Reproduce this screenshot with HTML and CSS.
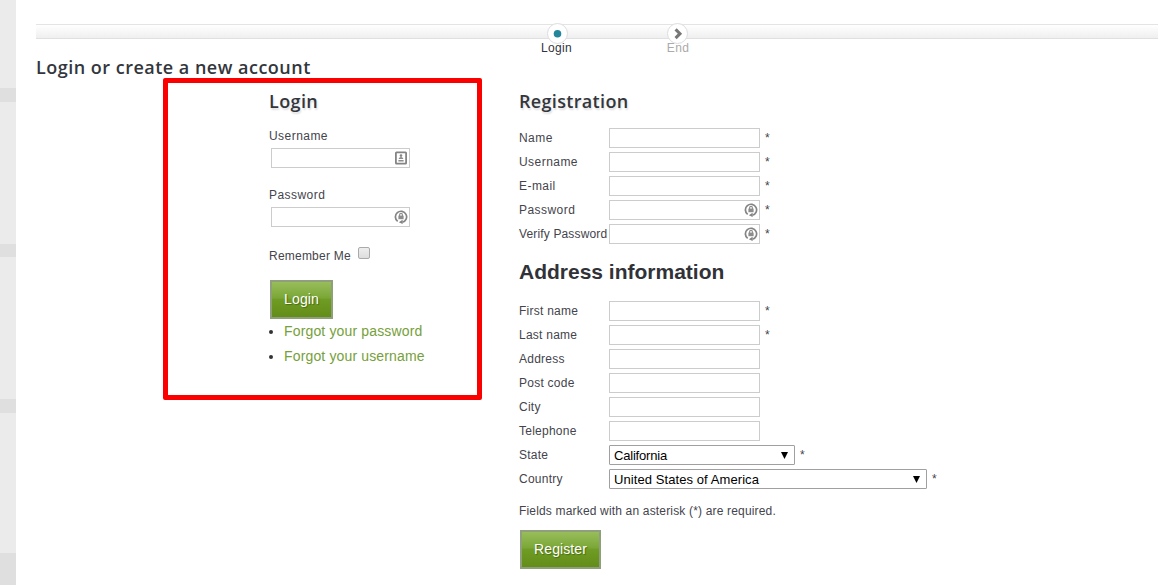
FILE: index.html
```html
<!DOCTYPE html>
<html lang="en">

<head>
    <meta charset="UTF-8" />
    <meta name="viewport" content="width=device-width, initial-scale=1.0" />
    <title>Login or create a new account</title>
    <link rel="stylesheet" href="styles.css">
</head>

<body>
    <svg class="sprite" aria-hidden="true">
        <symbol id="icon-user" viewBox="0 0 14 14">
            <rect x="1.9" y="1.4" width="10.2" height="11.2" rx="0.6" fill="#fff" stroke="#848484" stroke-width="1.8" />
            <circle cx="7" cy="4.6" r="1.3" fill="#848484" />
            <path d="M4.8 8V7.2Q7 5 9.2 7.2V8zM4.4 8.9h5.2v1.5H4.4z" fill="#8c8c8c" />
        </symbol>
        <symbol id="icon-lock" viewBox="0 0 14 14">
            <path d="M3.7 11.4A5.6 5.6 0 1 1 8.4 12.3" fill="none" stroke="#848484" stroke-width="1.7" />
            <path d="M4.8 12.2l3.8-2.5v4.3z" fill="#848484" />
            <path d="M5.6 6.2V4.8a1.4 1.4 0 0 1 2.8 0v1.4" fill="none" stroke="#8c8c8c" stroke-width="1.1" />
            <rect x="4.4" y="5.6" width="5.2" height="3.6" fill="#8c8c8c" />
        </symbol>
    </svg>

    <aside class="side-strip">
        <div class="side-block"></div>
        <div class="side-block"></div>
        <div class="side-block"></div>
        <div class="side-block"></div>
    </aside>

    <main class="page">
        <ol class="steps">
            <li class="step active">
                <svg class="step-icon" viewBox="0 0 20 20"><circle cx="10" cy="10.3" r="4" fill="#24869b" /></svg>
                <span>Login</span>
            </li>
            <li class="step">
                <svg class="step-icon" viewBox="0 0 20 20"><path d="M8 5.6l4.6 4.6L8 14.8" fill="none" stroke="#777" stroke-width="3.2" /></svg>
                <span>End</span>
            </li>
        </ol>

        <h1 class="page-title">Login or create a new account</h1>

        <div class="columns">
            <form class="login-form">
                <h2 class="heading login-heading">Login</h2>
                <label class="login-label" for="login-user">Username</label>
                <div class="field login-field">
                    <input type="text" id="login-user">
                    <svg class="field-icon"><use href="#icon-user" /></svg>
                </div>
                <label class="login-label" for="login-pass">Password</label>
                <div class="field login-field">
                    <input type="password" id="login-pass">
                    <svg class="field-icon"><use href="#icon-lock" /></svg>
                </div>
                <div class="remember">
                    <label for="remember">Remember Me</label>
                    <input type="checkbox" class="checkbox" id="remember">
                </div>
                <button type="button" class="btn">Login</button>
                <ul class="links">
                    <li><a href="#">Forgot your password</a></li>
                    <li><a href="#">Forgot your username</a></li>
                </ul>
            </form>

            <form class="register-form">
                <h2 class="heading">Registration</h2>
                <div class="rows">
                    <div class="row"><label for="name">Name</label><div class="field"><input type="text" id="name"></div><span class="star">*</span></div>
                    <div class="row"><label for="user">Username</label><div class="field"><input type="text" id="user"></div><span class="star">*</span></div>
                    <div class="row"><label for="email">E-mail</label><div class="field"><input type="text" id="email"></div><span class="star">*</span></div>
                    <div class="row">
                        <label for="pass">Password</label>
                        <div class="field"><input type="password" id="pass"><svg class="field-icon"><use href="#icon-lock" /></svg></div>
                        <span class="star">*</span>
                    </div>
                    <div class="row">
                        <label class="long" for="pass2">Verify Password</label>
                        <div class="field"><input type="password" id="pass2"><svg class="field-icon"><use href="#icon-lock" /></svg></div>
                        <span class="star">*</span>
                    </div>
                </div>

                <h2 class="address-heading">Address information</h2>
                <div class="rows address-rows">
                    <div class="row"><label for="first">First name</label><div class="field"><input type="text" id="first"></div><span class="star">*</span></div>
                    <div class="row"><label for="last">Last name</label><div class="field"><input type="text" id="last"></div><span class="star">*</span></div>
                    <div class="row"><label for="address">Address</label><div class="field"><input type="text" id="address"></div></div>
                    <div class="row"><label for="zip">Post code</label><div class="field"><input type="text" id="zip"></div></div>
                    <div class="row"><label for="city">City</label><div class="field"><input type="text" id="city"></div></div>
                    <div class="row"><label for="phone">Telephone</label><div class="field"><input type="text" id="phone"></div></div>
                    <div class="row">
                        <label>State</label>
                        <div class="select state"><span>California</span><svg class="caret" viewBox="0 0 7 7"><path d="M0 0h7L3.5 7z" /></svg></div>
                        <span class="star">*</span>
                    </div>
                    <div class="row">
                        <label>Country</label>
                        <div class="select country"><span>United States of America</span><svg class="caret" viewBox="0 0 7 7"><path d="M0 0h7L3.5 7z" /></svg></div>
                        <span class="star">*</span>
                    </div>
                </div>
                <p class="note">Fields marked with an asterisk (*) are required.</p>
                <button type="button" class="btn btn-register">Register</button>
            </form>
        </div>
    </main>

    <div class="login-frame"></div>
</body>

</html>
```
FILE: styles.css
```css
* {
    margin: 0;
    padding: 0;
    box-sizing: border-box;
}

body {
    position: relative;
    display: flex;
    height: 585px;
    overflow: hidden;
    background: #fff;
    color: #44444c;
    font-family: "Liberation Sans", Arial, sans-serif;
    font-size: 12px;
    letter-spacing: 0.45px;
}

.sprite {
    display: none;
}

/* left strip of the site background */
.side-strip {
    display: grid;
    grid-template-rows: 88px 142px 142px 140px;
    row-gap: 13.5px;
    width: 16px;
    background: #dfdfdf;
}

.side-block {
    background: #ebebeb;
}

.page {
    flex: 1;
    padding: 24px 0 0 20px;
}

/* progress steps */
.steps {
    display: flex;
    gap: 79px;
    height: 15px;
    padding-left: 501px;
    list-style: none;
    border-top: 1px solid #e4e4e4;
    border-bottom: 1px solid #e0e0e0;
    background: linear-gradient(#fff, #efefef);
}

.step {
    display: flex;
    flex-direction: column;
    align-items: center;
    width: 41px;
    margin-top: -2px;
    color: #aaa;
    letter-spacing: 0.3px;
    line-height: 14px;
}

.step.active {
    color: #333340;
}

.step span {
    margin-top: -3px;
    margin-right: 2px;
}

.step:last-child span {
    margin-right: -1px;
}

.step-icon {
    flex: none;
    width: 21px;
    height: 21px;
    border: 1px solid #ddd;
    border-radius: 50%;
    background: #fff;
}

.page-title,
.heading {
    color: #33363c;
    font-family: "Trebuchet MS", "Open Sans", sans-serif;
    font-size: 18px;
    font-weight: 600;
    line-height: 24px;
    letter-spacing: 0.4px;
}

.page-title {
    margin-top: 16px;
    letter-spacing: 0.49px;
}

.columns {
    display: flex;
    padding: 10px 0 0 233px;
}

.heading {
    text-shadow: 1px 2px 2px #ddd;
}

.login-form {
    width: 250px;
}

.login-label {
    display: block;
    line-height: 14px;
}

.login-heading {
    margin-bottom: 16px;
}

.field {
    position: relative;
    width: 151px;
    height: 20px;
}

.field input {
    display: block;
    width: 100%;
    height: 100%;
    border: 1px solid #ccc;
    background: #fff;
}

.field-icon {
    position: absolute;
    top: 3px;
    right: 2px;
    width: 14px;
    height: 14px;
}

.login-field {
    width: 139px;
    margin: 5px 0 20px 2px;
}

.remember {
    display: flex;
    gap: 7px;
    height: 33px;
    margin-top: 20px;
    letter-spacing: 0.22px;
}

.remember label {
    padding-top: 2px;
    line-height: 14px;
}

.checkbox {
    appearance: none;
    width: 12px;
    height: 12px;
    border: 1px solid #aaa;
    border-radius: 2px;
    background: linear-gradient(#eee, #ddd);
}

.btn {
    display: block;
    width: 63px;
    height: 39px;
    margin-left: 1px;
    padding-bottom: 2px;
    border: 2px solid #8f9f7c;
    background: linear-gradient(#98bd5b, #7ba737 45%, #6f9c25 50%, #638d18);
    color: #fff;
    font: 14px "Liberation Sans", Arial, sans-serif;
    letter-spacing: 0.1px;
    text-shadow: 1px 1px 1px #4b6b15;
}

.btn-register {
    width: 81px;
}

.links {
    padding-left: 15px;
    font-size: 14px;
    line-height: 25px;
    letter-spacing: 0.15px;
    color: #333;
}

.links a {
    color: #76a03a;
    text-decoration: none;
}

.rows {
    display: grid;
    row-gap: 4px;
}

.register-form .heading {
    margin-bottom: 15px;
    letter-spacing: 0.33px;
}

.row {
    display: flex;
    height: 20px;
    line-height: 20px;
}

.row label {
    width: 90px;
    white-space: nowrap;
}

.address-rows label {
    letter-spacing: 0.25px;
}

.row .long {
    letter-spacing: 0.15px;
}

.star {
    margin-left: 5px;
}

.address-heading {
    margin: 14px 0 15px;
    color: #303238;
    font-size: 21px;
    font-weight: bold;
    line-height: 28px;
    letter-spacing: 0;
}

.select {
    display: flex;
    align-items: center;
    justify-content: space-between;
    height: 20px;
    padding: 1px 6px 0 4px;
    border: 1px solid #a0a0a0;
    border-radius: 1px;
    color: #000;
    font-size: 13px;
    letter-spacing: 0.08px;
}

.state {
    width: 186px;
    letter-spacing: -0.2px;
}

.country {
    width: 318px;
}

.caret {
    width: 7px;
    height: 7px;
    margin-top: -1px;
}

.note {
    margin: 15px 0 12px;
    line-height: 14px;
    letter-spacing: 0.17px;
}

/* red box round the login form */
.login-frame {
    position: absolute;
    top: 78px;
    left: 163px;
    width: 319px;
    height: 322px;
    border: 5px solid #fb0000;
    border-radius: 2px;
    pointer-events: none;
}
```
